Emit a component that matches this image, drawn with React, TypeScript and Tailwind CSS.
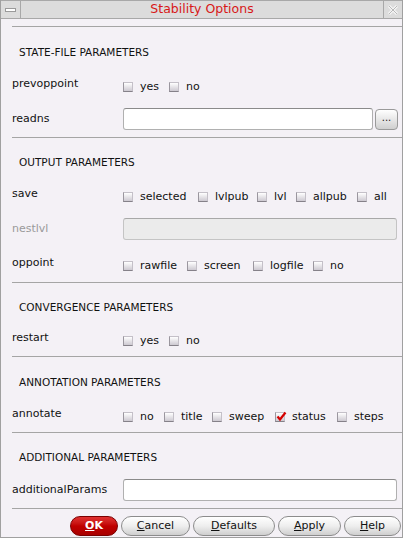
import { ReactNode } from "react"

const Check = ({ checked }: { checked?: boolean }) => (
  <span className="relative inline-block w-[10px] h-[10px] shrink-0 border border-[#c4c0c8] border-l-[#9a969e] border-b-[#858189] bg-linear-to-b from-white to-[#cdc9d1]">
    {checked && (
      <svg className="absolute left-[0px] top-[-2px]" width="11" height="11" viewBox="0 0 11 11">
        <path d="M1.5 5.5 L4 8.5 L9.5 1.5" stroke="#d40000" strokeWidth="2.2" fill="none" />
      </svg>
    )}
  </span>
)

type Opt = { label: string; w: string; checked?: boolean }

const Options = ({ items }: { items: Opt[] }) => (
  <div className="flex items-center pt-[2px]">
    {items.map((o) => (
      <div key={o.label} className={`flex items-center ${o.w}`}>
        <Check checked={o.checked} />
        <span className="ml-[7px] text-[11px] text-[#111]">{o.label}</span>
      </div>
    ))}
  </div>
)

const Row = ({
  label,
  dim,
  up,
  children,
}: {
  label: string
  dim?: boolean
  up?: boolean
  children: ReactNode
}) => (
  <div className="flex items-center h-[22px]">
    <div
      className={`w-[122px] pl-[11px] text-[11px] ${up ? "pb-[4px]" : "pt-[1px]"} ${
        dim ? "text-[#9a9a9a]" : "text-[#111]"
      }`}
    >
      {label}
    </div>
    {children}
  </div>
)

const Line = () => <div className="ml-[11px] h-px bg-[#a5a5a5]" />

const Heading = ({ text, h }: { text: string; h: string }) => (
  <div className={`flex items-center pl-[18px] pt-[4px] text-[10.5px] text-[#111] ${h}`}>{text}</div>
)

const Btn = ({ children, w, ok }: { children: ReactNode; w: string; ok?: boolean }) => (
  <div
    className={`${w} h-[20px] rounded-full flex items-center justify-center text-[11px] ${
      ok
        ? "bg-linear-to-b from-[#e03030] via-[#c00000] to-[#a80000] border border-[#7a0000] text-white font-bold"
        : "bg-linear-to-b from-white via-[#eeeeee] to-[#cfcfcf] border border-[#8c8c8c] text-[#111]"
    }`}
  >
    {children}
  </div>
)

export default function App() {
  return (
    <div className="w-[403px] h-[538px] bg-[#f4f1f6] border border-[#a0a0a0] border-t-0 font-['DejaVu_Sans',sans-serif] overflow-hidden flex flex-col">
      {/* title bar */}
      <div className="h-[19px] flex bg-[#a8a8a8] gap-px pt-px pb-px shrink-0">
        <div className="w-[19px] bg-[#dcdcdc] flex items-center justify-center">
          <div className="w-[11px] h-[4px] bg-white border border-[#9a9a9a] mt-[1px]" />
        </div>
        <div className="flex-1 bg-[#dcdcdc] flex items-center justify-center text-[12.5px] text-[#d81818]">
          Stability Options
        </div>
        <div className="w-[18px] bg-[#dcdcdc] flex items-center justify-center">
          <svg width="12" height="12" viewBox="0 0 12 12">
            <path d="M2 2 L10 10 M10 2 L2 10" stroke="#f4f4f4" strokeWidth="3" />
            <path d="M2 2 L10 10 M10 2 L2 10" stroke="#b8b8b8" strokeWidth="1" fill="none" />
          </svg>
        </div>
      </div>

      <div className="h-[7px]" />
      <Line />
      <Heading text="STATE-FILE PARAMETERS" h="h-[48px]" />
      <Row label="prevoppoint" up>
        <Options items={[{ label: "yes", w: "w-[46px]" }, { label: "no", w: "w-[30px]" }]} />
      </Row>
      <div className="h-[11px]" />
      <Row label="readns">
        <div className="w-[250px] h-[22px] bg-white border border-[#b0b0b0] border-t-[#8a8a8a] rounded-[3px]" />
        <div className="ml-[2px] w-[23px] h-[21px] rounded-[4px] border border-[#9a9a9a] bg-linear-to-b from-white to-[#cfcfcf] flex items-center justify-center text-[10px] text-[#222] pb-[3px]">
          ...
        </div>
      </Row>
      <div className="h-[7px]" />
      <Line />
      <Heading text="OUTPUT PARAMETERS" h="h-[46px]" />
      <div className="h-px" />
      <Row label="save" up>
        <Options
          items={[
            { label: "selected", w: "w-[75px]" },
            { label: "lvlpub", w: "w-[59px]" },
            { label: "lvl", w: "w-[39px]" },
            { label: "allpub", w: "w-[61px]" },
            { label: "all", w: "w-[30px]" },
          ]}
        />
      </Row>
      <div className="h-[11px]" />
      <Row label="nestlvl" dim>
        <div className="w-[274px] h-[22px] bg-[#ebebeb] border border-[#c4c4c4] border-t-[#a8a8a8] rounded-[3px]" />
      </Row>
      <div className="h-[14px]" />
      <Row label="oppoint" up>
        <Options
          items={[
            { label: "rawfile", w: "w-[64px]" },
            { label: "screen", w: "w-[66px]" },
            { label: "logfile", w: "w-[60px]" },
            { label: "no", w: "w-[30px]" },
          ]}
        />
      </Row>
      <div className="h-[6px]" />
      <Line />
      <Heading text="CONVERGENCE PARAMETERS" h="h-[45px]" />
      <div className="h-px" />
      <Row label="restart" up>
        <Options items={[{ label: "yes", w: "w-[46px]" }, { label: "no", w: "w-[30px]" }]} />
      </Row>
      <div className="h-[5px]" />
      <Line />
      <Heading text="ANNOTATION PARAMETERS" h="h-[48px]" />
      <Row label="annotate" up>
        <Options
          items={[
            { label: "no", w: "w-[41px]" },
            { label: "title", w: "w-[48px]" },
            { label: "sweep", w: "w-[63px]" },
            { label: "status", w: "w-[62px]", checked: true },
            { label: "steps", w: "w-[50px]" },
          ]}
        />
      </Row>
      <div className="h-[5px]" />
      <Line />
      <Heading text="ADDITIONAL PARAMETERS" h="h-[46px]" />
      <Row label="additionalParams">
        <div className="w-[274px] h-[22px] bg-white border border-[#b0b0b0] border-t-[#8a8a8a] rounded-[3px]" />
      </Row>
      <div className="h-[7px]" />
      <Line />
      <div className="h-[7px]" />
      <div className="flex pl-[69px] gap-[3px]">
        <Btn w="w-[48px]" ok>
          <span className="underline">O</span>K
        </Btn>
        <Btn w="w-[69px]">
          <span className="underline">C</span>ancel
        </Btn>
        <Btn w="w-[82px]">
          <span className="underline">D</span>efaults
        </Btn>
        <Btn w="w-[63px]">
          <span className="underline">A</span>pply
        </Btn>
        <Btn w="w-[57px]">
          <span className="underline">H</span>elp
        </Btn>
      </div>
    </div>
  )
}
